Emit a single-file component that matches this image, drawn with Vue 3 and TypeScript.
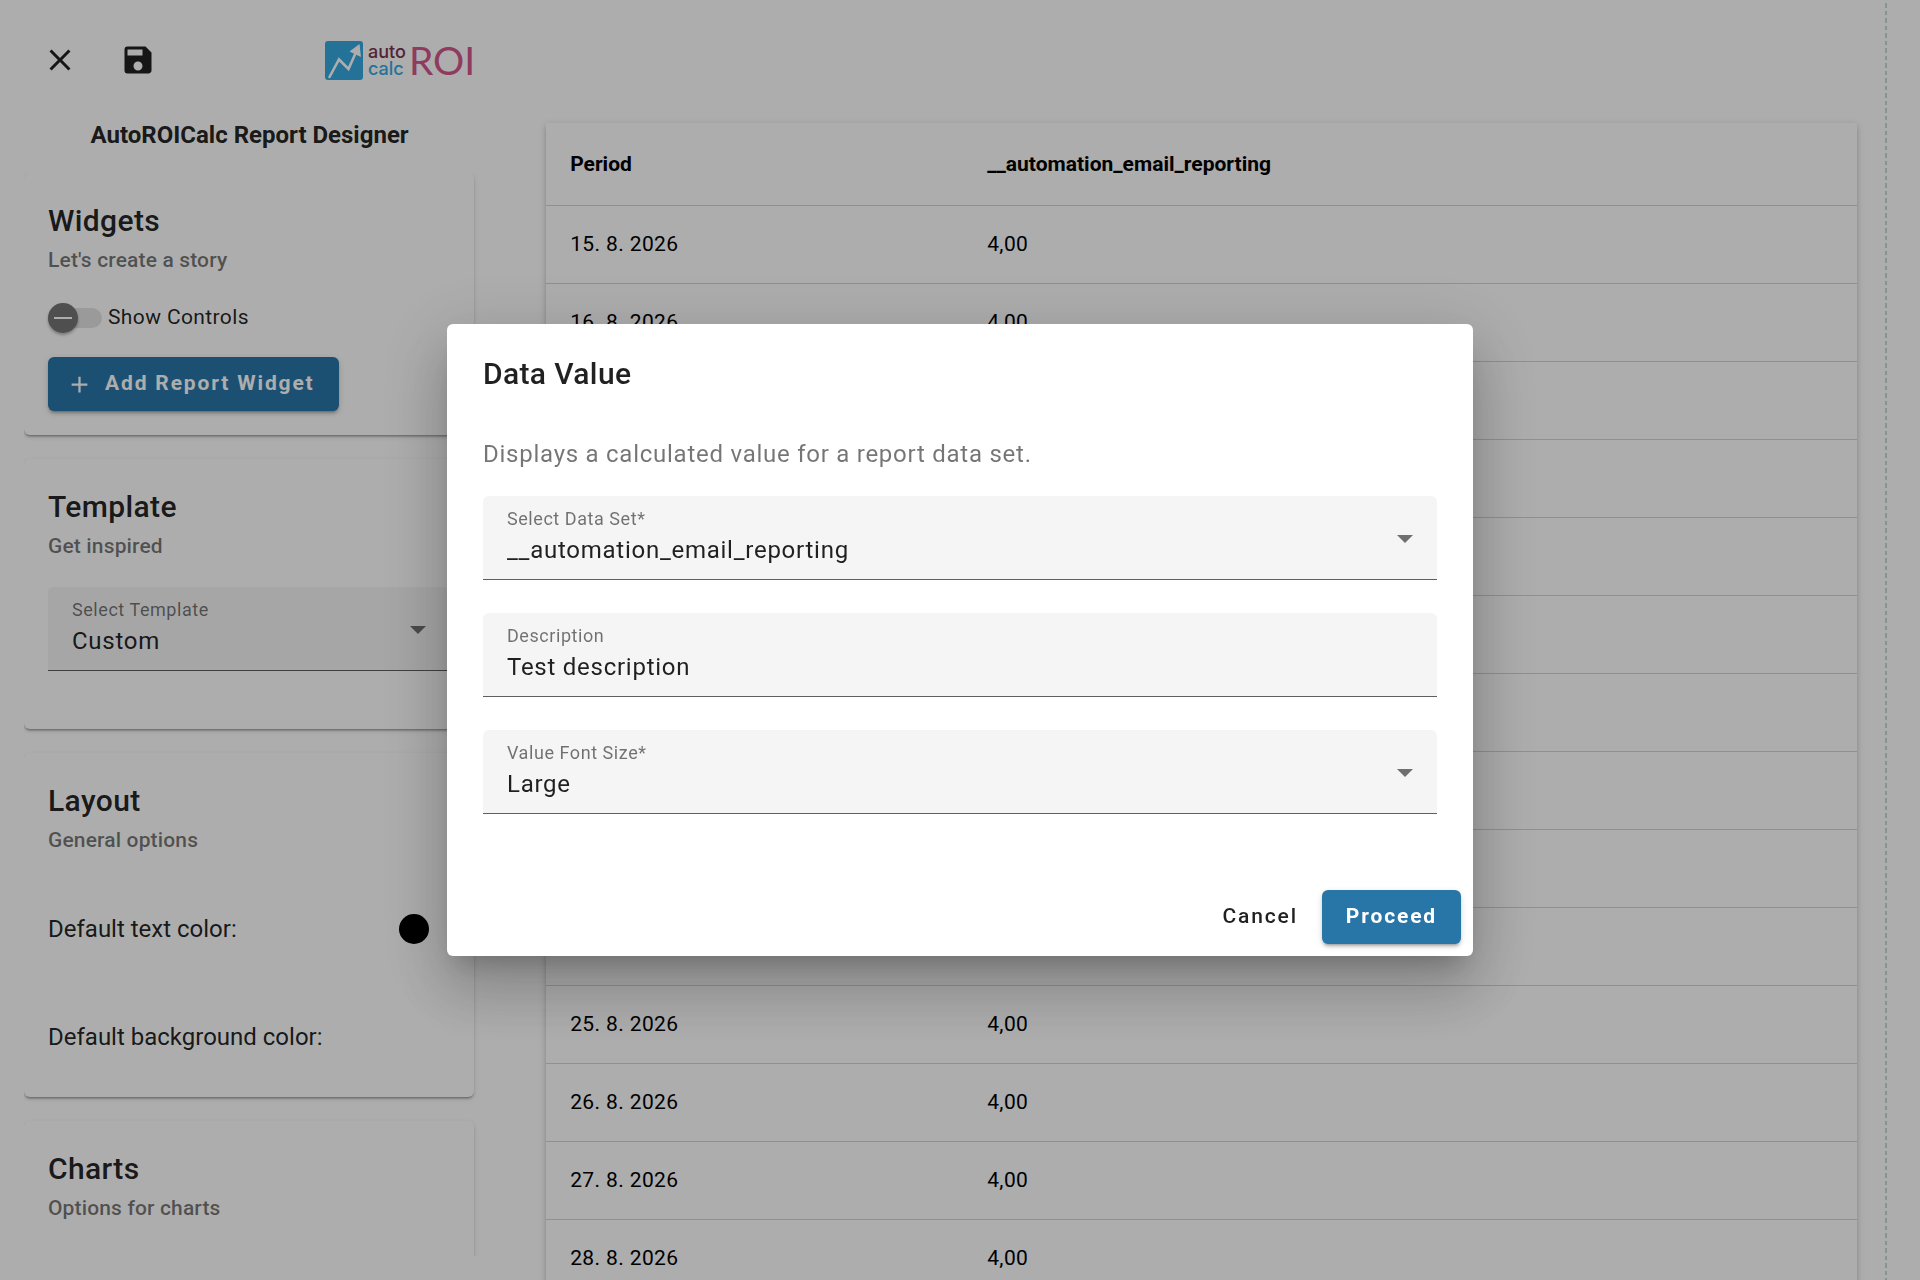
<script setup lang="ts">
import { ref } from 'vue'

interface ReportRow {
  period: string
  value: string
}

const showControls = ref(false)
const template = ref('Custom')
const textColor = ref('#000000')
const backgroundColor = ref('#ffffff')

const dataSet = ref('__automation_email_reporting')
const description = ref('Test description')
const fontSize = ref('Large')

const rows: ReportRow[] = Array.from({ length: 14 }, (_, i) => ({
  period: `${15 + i}. 8. 2026`,
  value: '4,00',
}))
</script>

<template>
  <div class="page">
    <aside class="sidebar">
      <header class="toolbar">
        <button class="icon-button" type="button" aria-label="Close">
          <svg viewBox="0 0 24 24" width="36" height="36"><path fill="currentColor" d="M19 6.41L17.59 5 12 10.59 6.41 5 5 6.41 10.59 12 5 17.59 6.41 19 12 13.41 17.59 19 19 17.59 13.41 12z" /></svg>
        </button>
        <button class="icon-button" type="button" aria-label="Save">
          <svg viewBox="0 0 24 24" width="36" height="36"><path fill="currentColor" d="M17 3H5a2 2 0 0 0-2 2v14a2 2 0 0 0 2 2h14c1.100 0 2-.9 2-2V7l-4-4zm-5 16c-1.660 0-3-1.340-3-3s1.340-3 3-3 3 1.340 3 3-1.340 3-3 3zm3-10H5V5h10v4z" /></svg>
        </button>
        <div class="logo">
          <svg viewBox="0 0 38 39" width="38" height="39" aria-hidden="true">
            <rect width="38" height="39" rx="3" fill="#37a9e0" />
            <path d="M4.500 36L14 18.500L23.500 28L32 9" fill="none" stroke="#fff" stroke-width="2.600" stroke-linecap="round" />
            <path d="M34.500 3L36 16L24.500 10.500Z" fill="#fff" />
          </svg>
          <div class="logo-words"><span class="logo-auto">auto</span><span class="logo-calc">calc</span></div>
          <span class="logo-roi">ROI</span>
        </div>
      </header>
      <h1 class="app-title">AutoROICalc Report Designer</h1>

      <div class="cards">
        <section class="card card-widgets">
          <h2>Widgets</h2>
          <p class="subtitle">Let's create a story</p>
          <label class="toggle">
            <input v-model="showControls" type="checkbox" role="switch" />
            <span>Show Controls</span>
          </label>
          <button class="button primary" type="button">
            <svg class="add" viewBox="0 0 24 24" width="27" height="27"><path fill="currentColor" d="M19 13h-6v6h-2v-6H5v-2h6V5h2v6h6v2z" /></svg>
            Add Report Widget
          </button>
        </section>

        <section class="card card-template">
          <h2>Template</h2>
          <p class="subtitle">Get inspired</p>
          <div class="field">
            <div class="field-body">
              <label for="template">Select Template</label>
              <select id="template" v-model="template"><option>Custom</option></select>
            </div>
            <svg class="arrow" viewBox="0 0 16 8" width="16" height="8"><path d="M0 0h16L8 8z" fill="currentColor" /></svg>
          </div>
        </section>

        <section class="card card-layout">
          <h2>Layout</h2>
          <p class="subtitle">General options</p>
          <div class="color-row">
            <label for="text-color">Default text color:</label>
            <input id="text-color" v-model="textColor" type="color" />
          </div>
          <div class="color-row">
            <label for="background-color">Default background color:</label>
            <input id="background-color" v-model="backgroundColor" type="color" />
          </div>
        </section>

        <section class="card card-charts">
          <h2>Charts</h2>
          <p class="subtitle">Options for charts</p>
        </section>
      </div>
    </aside>

    <main class="report">
      <table>
        <thead>
          <tr><th class="col-period">Period</th><th>__automation_email_reporting</th></tr>
        </thead>
        <tbody>
          <tr v-for="row in rows" :key="row.period"><td>{{ row.period }}</td><td>{{ row.value }}</td></tr>
        </tbody>
      </table>
    </main>
    <div class="page-edge"></div>

    <div class="backdrop">
      <form class="dialog" role="dialog" aria-modal="true" aria-labelledby="dialog-title" @submit.prevent>
        <h2 id="dialog-title">Data Value</h2>
        <div class="dialog-content">
          <p>Displays a calculated value for a report data set.</p>
          <div class="fields">
            <div class="field">
              <div class="field-body">
                <label for="data-set">Select Data Set*</label>
                <select id="data-set" v-model="dataSet"><option>__automation_email_reporting</option></select>
              </div>
              <svg class="arrow" viewBox="0 0 16 8" width="16" height="8"><path d="M0 0h16L8 8z" fill="currentColor" /></svg>
            </div>
            <div class="field">
              <div class="field-body">
                <label for="description">Description</label>
                <input id="description" v-model="description" type="text" />
              </div>
            </div>
            <div class="field">
              <div class="field-body">
                <label for="font-size">Value Font Size*</label>
                <select id="font-size" v-model="fontSize"><option>Large</option></select>
              </div>
              <svg class="arrow" viewBox="0 0 16 8" width="16" height="8"><path d="M0 0h16L8 8z" fill="currentColor" /></svg>
            </div>
          </div>
        </div>
        <div class="dialog-actions">
          <button class="button text" type="button">Cancel</button>
          <button class="button primary" type="submit">Proceed</button>
        </div>
      </form>
    </div>
  </div>
</template>

<style>
body {
  margin: 0;
  background: #fff;
}
</style>

<style scoped>
* {
  box-sizing: border-box;
}

.page {
  display: flex;
  height: 100vh;
  overflow: hidden;
  font-family: Roboto, "Liberation Sans", sans-serif;
  color: rgba(0, 0, 0, 0.87);
}

h1,
h2,
p {
  margin: 0;
}

/* Sidebar */
.sidebar {
  display: flex;
  flex-direction: column;
  flex: 0 0 26%;
  min-width: 0;
  padding: 24px 0 24px 24px;
}

.toolbar {
  display: flex;
  align-items: center;
  height: 72px;
  padding-right: 24px;
}

.icon-button {
  display: grid;
  place-items: center;
  width: 72px;
  height: 72px;
  margin-right: 6px;
  padding: 0;
  border: 0;
  background: none;
  color: inherit;
}

.logo {
  display: flex;
  align-items: center;
  margin-left: auto;
  font-family: Lato, sans-serif;
}

.logo-words {
  display: flex;
  flex-direction: column;
  margin-left: 5px;
  font-family: Inter, sans-serif;
  font-size: 18px;
  font-weight: 500;
  line-height: 17px;
}

.logo-auto {
  color: #7a3450;
}

.logo-calc {
  color: #37a9e0;
}

.logo-roi {
  margin-left: 3px;
  font-size: 39px;
  line-height: 40px;
  color: #d3568c;
}

.app-title {
  margin: 15px 24px 14px 0;
  font-size: 24px;
  line-height: 48px;
  font-weight: 700;
  text-align: center;
}

.cards {
  flex: 1;
  min-height: 0;
  overflow: hidden;
  padding-right: 25px;
}

.card {
  margin-bottom: 24px;
  padding: 24px;
  border-radius: 6px;
  background: #fff;
  box-shadow: 0 3px 2px -2px rgba(0, 0, 0, 0.2), 0 2px 2px rgba(0, 0, 0, 0.14), 0 2px 5px rgba(0, 0, 0, 0.12);
}

.card-widgets {
  height: 262px;
}

.card-template {
  height: 270px;
}

.card-layout {
  height: 344px;
}

.card-charts {
  height: 270px;
}

.card h2,
.dialog h2 {
  font-size: 30px;
  line-height: 48px;
  font-weight: 500;
  letter-spacing: 0.0125em;
}

.subtitle {
  font-size: 21px;
  line-height: 30px;
  font-weight: 500;
  letter-spacing: 0.007em;
  color: rgba(0, 0, 0, 0.54);
}

.toggle {
  display: flex;
  align-items: center;
  gap: 6px;
  height: 30px;
  margin: 28px 0 24px;
  font-size: 21px;
  letter-spacing: 0.018em;
}

.toggle span {
  padding-bottom: 3px;
}

.toggle input {
  appearance: none;
  display: flex;
  align-items: center;
  width: 54px;
  height: 20px;
  margin: 0;
  border-radius: 10px;
  background: #e3e3e3;
}

.toggle input::before {
  content: "";
  width: 30px;
  height: 30px;
  border-radius: 50%;
  background: linear-gradient(#fff, #fff) center / 18px 2px no-repeat, #757575;
  box-shadow: 0 2px 3px rgba(0, 0, 0, 0.3);
}

.button {
  display: inline-flex;
  align-items: center;
  height: 54px;
  padding: 0 24px 3px;
  border: 0;
  border-radius: 6px;
  font: 500 21px/30px Roboto, sans-serif;
  letter-spacing: 0.088em;
  color: inherit;
  white-space: nowrap;
}

.button.primary {
  background: #2876a8;
  color: #fff;
  font-weight: 700;
  box-shadow: 0 4px 2px -3px rgba(0, 0, 0, 0.2), 0 3px 3px rgba(0, 0, 0, 0.14), 0 2px 7px rgba(0, 0, 0, 0.12);
}

.button.text {
  padding: 0 12px 3px;
  background: none;
}

.add {
  margin: 4px 12px 0 -6px;
}

/* Filled form fields */
.field {
  display: flex;
  align-items: center;
  height: 84px;
  padding: 0 24px;
  border-bottom: 1px solid #5f5f5f;
  border-radius: 6px 6px 0 0;
  background: #f5f5f5;
}

.card .field {
  margin-top: 26px;
}

.field-body {
  display: flex;
  flex: 1;
  flex-direction: column;
  min-width: 0;
}

.field label {
  font-size: 18px;
  line-height: 24px;
  letter-spacing: 0.031em;
  color: rgba(0, 0, 0, 0.54);
}

.field select,
.field input {
  appearance: none;
  width: 100%;
  height: 37px;
  padding: 0;
  border: 0;
  outline: 0;
  background: none;
  font: 400 24px/36px Roboto, sans-serif;
  letter-spacing: 0.031em;
  color: rgba(0, 0, 0, 0.87);
}

.arrow {
  flex: none;
  margin-top: 3px;
  color: #6f6f6f;
}

.color-row {
  display: flex;
  align-items: center;
  justify-content: space-between;
  height: 108px;
  padding-right: 21px;
  font-size: 24px;
}

.subtitle + .color-row {
  margin-top: 20px;
}

.color-row input {
  appearance: none;
  width: 30px;
  height: 30px;
  padding: 0;
  border: 0;
  border-radius: 50%;
  overflow: hidden;
  background: none;
}

.color-row input::-webkit-color-swatch-wrapper {
  padding: 0;
}

.color-row input::-webkit-color-swatch {
  border: 0;
}

/* Report canvas */
.report {
  flex: 1;
  min-width: 0;
  padding: 123px 28px 0 47px;
}

.page-edge {
  flex: none;
  width: 2px;
  margin-right: 33px;
  background: repeating-linear-gradient(transparent 0 3px, #c8d8d8 3px 8px, transparent 8px 11px, #c8d8d8 11px 15px);
}

table {
  width: 100%;
  border-collapse: separate;
  border-spacing: 0;
  table-layout: fixed;
  background: #fff;
  color: #000;
  box-shadow: 0 3px 5px -1px rgba(0, 0, 0, 0.15), 0 2px 6px rgba(0, 0, 0, 0.12), 0 2px 10px rgba(0, 0, 0, 0.06);
}

th,
td {
  height: 78px;
  padding: 0 24px 1px;
  border-bottom: 1px solid #d4d4d4;
  font-size: 21px;
  line-height: 30px;
  text-align: left;
}

th {
  height: 83px;
  padding-bottom: 0;
  font-weight: 700;
}

td {
  letter-spacing: 0.018em;
}

.col-period {
  width: 417px;
}

/* Dialog */
.backdrop {
  position: fixed;
  inset: 0;
  display: grid;
  place-items: center;
  background: rgba(0, 0, 0, 0.32);
}

.dialog {
  width: 1026px;
  max-width: 80vw;
  border-radius: 6px;
  background: #fff;
  box-shadow: 0 17px 23px -11px rgba(0, 0, 0, 0.2), 0 36px 57px 5px rgba(0, 0, 0, 0.14), 0 14px 69px 12px rgba(0, 0, 0, 0.12);
}

.dialog h2 {
  padding: 26px 36px 0;
}

.dialog-content {
  padding: 38px 36px 64px;
}

.dialog-content p {
  margin-bottom: 24px;
  font-size: 24px;
  line-height: 36px;
  letter-spacing: 0.031em;
  color: rgba(0, 0, 0, 0.54);
}

.fields {
  display: flex;
  flex-direction: column;
  gap: 33px;
}

.dialog-actions {
  display: flex;
  justify-content: flex-end;
  gap: 12px;
  padding: 12px;
}
</style>
